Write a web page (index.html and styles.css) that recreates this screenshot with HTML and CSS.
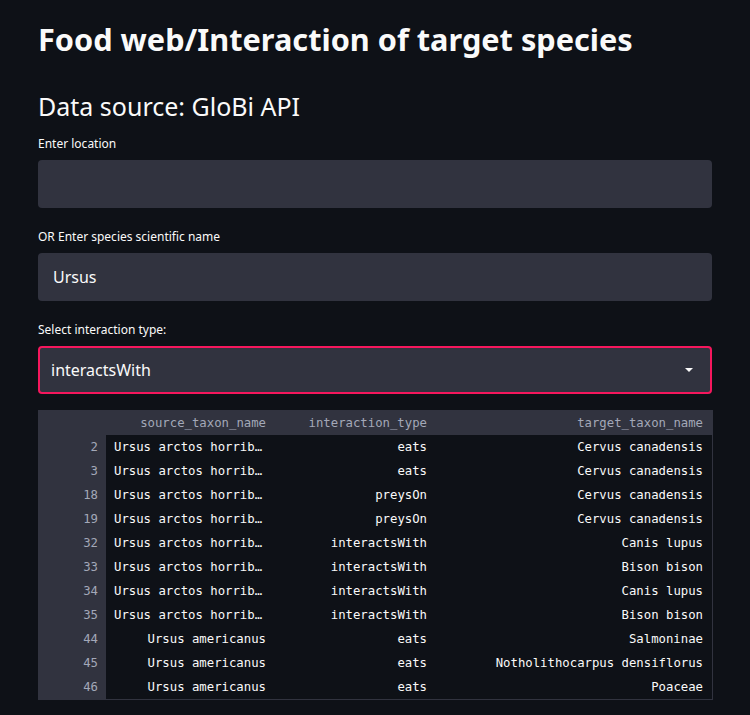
FILE: index.html
```html
<!DOCTYPE html>
<html>
<head>
<meta charset="utf-8">
<link rel="stylesheet" href="styles.css">
</head>
<body>
<main class="page">
  <h1 class="title">Food web/Interaction of target species</h1>
  <h2 class="subtitle">Data source: GloBi API</h2>

  <div class="field">
    <label class="label">Enter location</label>
    <div class="input"></div>
  </div>

  <div class="field">
    <label class="label">OR Enter species scientific name</label>
    <div class="input"><span class="value">Ursus</span></div>
  </div>

  <div class="field">
    <label class="label">Select interaction type:</label>
    <div class="select">
      <span class="value">interactsWith</span>
      <svg class="caret" width="10" height="6" viewBox="0 0 10 6"><path d="M1 1h8L5 5z" fill="#fafafa"/></svg>
    </div>
  </div>

  <div class="grid">
    <div class="hrow">
      <div class="c idx"></div>
      <div class="c src">source_taxon_name</div>
      <div class="c typ">interaction_type</div>
      <div class="c tgt">target_taxon_name</div>
    </div>
    <div class="row"><div class="c idx">2</div><div class="c src left">Ursus arctos horrib…</div><div class="c typ">eats</div><div class="c tgt">Cervus canadensis</div></div>
    <div class="row"><div class="c idx">3</div><div class="c src left">Ursus arctos horrib…</div><div class="c typ">eats</div><div class="c tgt">Cervus canadensis</div></div>
    <div class="row"><div class="c idx">18</div><div class="c src left">Ursus arctos horrib…</div><div class="c typ">preysOn</div><div class="c tgt">Cervus canadensis</div></div>
    <div class="row"><div class="c idx">19</div><div class="c src left">Ursus arctos horrib…</div><div class="c typ">preysOn</div><div class="c tgt">Cervus canadensis</div></div>
    <div class="row"><div class="c idx">32</div><div class="c src left">Ursus arctos horrib…</div><div class="c typ">interactsWith</div><div class="c tgt">Canis lupus</div></div>
    <div class="row"><div class="c idx">33</div><div class="c src left">Ursus arctos horrib…</div><div class="c typ">interactsWith</div><div class="c tgt">Bison bison</div></div>
    <div class="row"><div class="c idx">34</div><div class="c src left">Ursus arctos horrib…</div><div class="c typ">interactsWith</div><div class="c tgt">Canis lupus</div></div>
    <div class="row"><div class="c idx">35</div><div class="c src left">Ursus arctos horrib…</div><div class="c typ">interactsWith</div><div class="c tgt">Bison bison</div></div>
    <div class="row"><div class="c idx">44</div><div class="c src">Ursus americanus</div><div class="c typ">eats</div><div class="c tgt">Salmoninae</div></div>
    <div class="row"><div class="c idx">45</div><div class="c src">Ursus americanus</div><div class="c typ">eats</div><div class="c tgt">Notholithocarpus densiflorus</div></div>
    <div class="row"><div class="c idx">46</div><div class="c src">Ursus americanus</div><div class="c typ">eats</div><div class="c tgt">Poaceae</div></div>
  </div>
</main>
</body>
</html>
```

FILE: styles.css
```css
html, body {
  margin: 0;
  padding: 0;
  background: #0e1117;
  color: #fafafa;
  font-family: "Noto Sans", "Open Sans", sans-serif;
}

.page {
  width: 674px;
  padding: 0 0 0 38px;
}

.title {
  margin: 0;
  padding-top: 17px;
  font-size: 30.7px;
  font-weight: 700;
  line-height: 44px;
}

.subtitle {
  margin: 0;
  padding-top: 28px;
  font-size: 25px;
  font-weight: 400;
  line-height: 34px;
}

.field {
  display: flex;
  flex-direction: column;
}

.label {
  display: block;
  font-size: 12px;
  line-height: 16px;
  padding-top: 13px;
  padding-bottom: 8px;
}

.field + .field .label {
  padding-top: 21px;
}

.input {
  height: 48px;
  background: #31333f;
  border-radius: 4px;
  display: flex;
  align-items: center;
  padding-left: 15px;
  box-sizing: border-box;
}

.value {
  font-size: 16px;
}

.select {
  height: 48px;
  background: #31333f;
  border: 2px solid #f5175d;
  border-radius: 4px;
  box-sizing: border-box;
  display: flex;
  align-items: center;
  justify-content: space-between;
  padding: 0 16px 0 11px;
}

.caret {
  display: block;
}

.grid {
  margin-top: 16px;
  width: 674px;
  border-right: 1px solid #31333f;
  border-bottom: 1px solid #31333f;
  font-family: "DejaVu Sans Mono", "Liberation Mono", monospace;
  font-size: 12.3px;
}

.hrow, .row {
  display: flex;
  height: 24px;
  align-items: center;
}

.hrow {
  height: 25px;
  background: #31333f;
  color: #a3a8b8;
}

.c {
  padding: 0 8px;
  box-sizing: border-box;
  white-space: nowrap;
  text-align: right;
  line-height: 24px;
}

.c.left {
  text-align: left;
}

.row .idx {
  background: #31333f;
  color: #a3a8b8;
}

.idx { width: 68px; flex: none; align-self: stretch; }
.src { width: 168px; flex: none; }
.typ { width: 161px; flex: none; }
.tgt { width: 276px; flex: none; }
```
